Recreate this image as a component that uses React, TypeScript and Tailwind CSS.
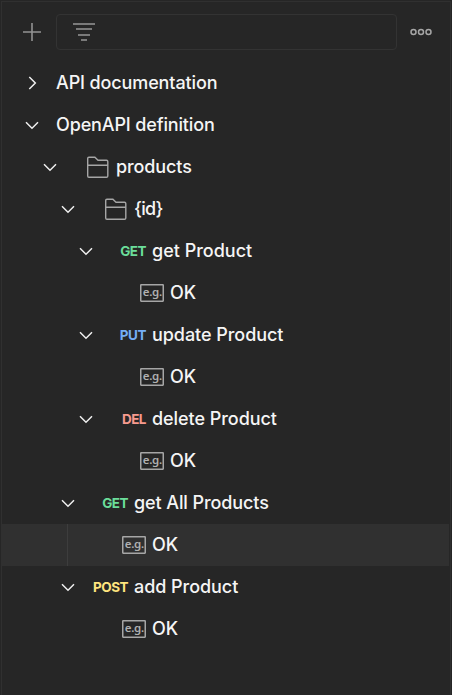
import React from 'react';

type Kind = 'root' | 'folder' | 'example' | 'GET' | 'PUT' | 'DEL' | 'POST';

interface Row {
  label: string;
  kind: Kind;
  level: number;
  closed?: boolean;
  selected?: boolean;
  tracking?: string;
}

const rows: Row[] = [
  { label: 'API documentation', kind: 'root', level: 0, closed: true, tracking: 'tracking-[-0.12px]' },
  { label: 'OpenAPI definition', kind: 'root', level: 0, tracking: 'tracking-[-0.14px]' },
  { label: 'products', kind: 'folder', level: 1, tracking: 'tracking-[-0.1px]' },
  { label: '{id}', kind: 'folder', level: 2, tracking: 'tracking-[-0.7px]' },
  { label: 'get Product', kind: 'GET', level: 3, tracking: 'tracking-normal' },
  { label: 'OK', kind: 'example', level: 4 },
  { label: 'update Product', kind: 'PUT', level: 3 },
  { label: 'OK', kind: 'example', level: 4 },
  { label: 'delete Product', kind: 'DEL', level: 3 },
  { label: 'OK', kind: 'example', level: 4 },
  { label: 'get All Products', kind: 'GET', level: 2, tracking: 'tracking-[-0.1px]' },
  { label: 'OK', kind: 'example', level: 3, selected: true },
  { label: 'add Product', kind: 'POST', level: 2 },
  { label: 'OK', kind: 'example', level: 3 },
];

const indents = ['pl-[21px]', 'pl-[39px]', 'pl-[57px]', 'pl-[75px]', 'pl-[93px]'];

const methodColors: Record<string, string> = {
  GET: 'text-[#6bdd9a]',
  PUT: 'text-[#74aef6]',
  DEL: 'text-[#f79a8e]',
  POST: 'text-[#ffe47e]',
};

function Chevron({ closed }: { closed?: boolean }) {
  return (
    <svg width="18" height="18" viewBox="0 0 18 18" fill="none" stroke="#f0f0f0" strokeWidth="1.5" className="shrink-0">
      <path d={closed ? 'M6.3 3L12.3 9L6.3 15' : 'M3 6.3L9 12.3L15 6.3'} />
    </svg>
  );
}

function Folder() {
  return (
    <svg width="24" height="24" viewBox="0 0 24 24" fill="none" stroke="#a6a6a6" strokeWidth="1.4">
      <path d="M2.9 2.2H8.9L12 5.2H20.5Q21.8 5.2 21.8 6.5V20.9Q21.8 22.2 20.5 22.2H2.9Q1.7 22.2 1.7 20.9V3.5Q1.7 2.2 2.9 2.2ZM1.7 10.2H21.8" />
    </svg>
  );
}

function Marker({ kind }: { kind: Kind }) {
  if (kind === 'folder') return <Folder />;
  if (kind === 'example')
    return (
      <svg width="24" height="18" viewBox="0 0 24 18">
        <rect x="0.75" y="0.75" width="22.5" height="16.5" rx="0.4" fill="none" stroke="#a6a6a6" strokeWidth="1.5" />
        <text x="2.7" y="11.7" textLength="19.4" fill="#b0b0b0" fontSize="11.5" fontFamily="'Noto Sans', sans-serif" fontWeight="600">
          e.g.
        </text>
      </svg>
    );
  return (
    <span className={`-mr-px text-[13.5px] leading-[18px] font-bold tracking-[-0.5px] pr-px ${methodColors[kind]}`}>{kind}</span>
  );
}

function TreeRow({ row }: { row: Row }) {
  return (
    <div className={`relative mr-px flex h-[42px] items-center ${indents[row.level]} ${row.selected ? 'bg-[#303030]' : ''}`}>
      {row.selected && <span className="absolute left-[65px] top-0 h-full w-px bg-[#3d3d3d]" />}
      {row.kind === 'example' ? <span className="w-[18px]" /> : <Chevron closed={row.closed} />}
      {row.kind === 'root' ? (
        <span className="w-[15px]" />
      ) : (
        <span className="mr-1.5 flex w-[51px] items-center justify-end">
          <Marker kind={row.kind} />
        </span>
      )}
      <span className={`whitespace-nowrap text-[18px] leading-[26px] font-medium ${row.tracking ?? 'tracking-[-0.05px]'}`}>
        {row.label}
      </span>
    </div>
  );
}

export default function App() {
  return (
    <div className="h-[695px] w-[452px] overflow-hidden bg-[#262626] px-px pt-px font-['Inter',sans-serif] text-[#f5f5f5]">
      <div className="h-full border-x border-t border-[#303030]">
        <div className="flex h-[60px] items-center pl-[20px]">
          <svg width="20" height="20" viewBox="0 0 20 20" stroke="#929292" strokeWidth="1.6">
            <path d="M10 1V19M1 10H19" />
          </svg>
          <div className="ml-[14px] flex h-9 w-[341px] items-center rounded-[4px] border border-[#333333] pl-4">
            <svg width="22" height="20" viewBox="0 0 22 20" stroke="#969696" strokeWidth="1.7">
              <path d="M0 2H22M3 7H19M5 13H17M8 18H14" />
            </svg>
          </div>
          <svg width="22" height="8" viewBox="0 0 22 8" fill="none" stroke="#a6a6a6" strokeWidth="1.5" className="ml-[13px]">
            <circle cx="3.5" cy="4" r="2.5" />
            <circle cx="11" cy="4" r="2.5" />
            <circle cx="18.5" cy="4" r="2.5" />
          </svg>
        </div>
        {rows.map((row, i) => (
          <TreeRow key={i} row={row} />
        ))}
      </div>
    </div>
  );
}
